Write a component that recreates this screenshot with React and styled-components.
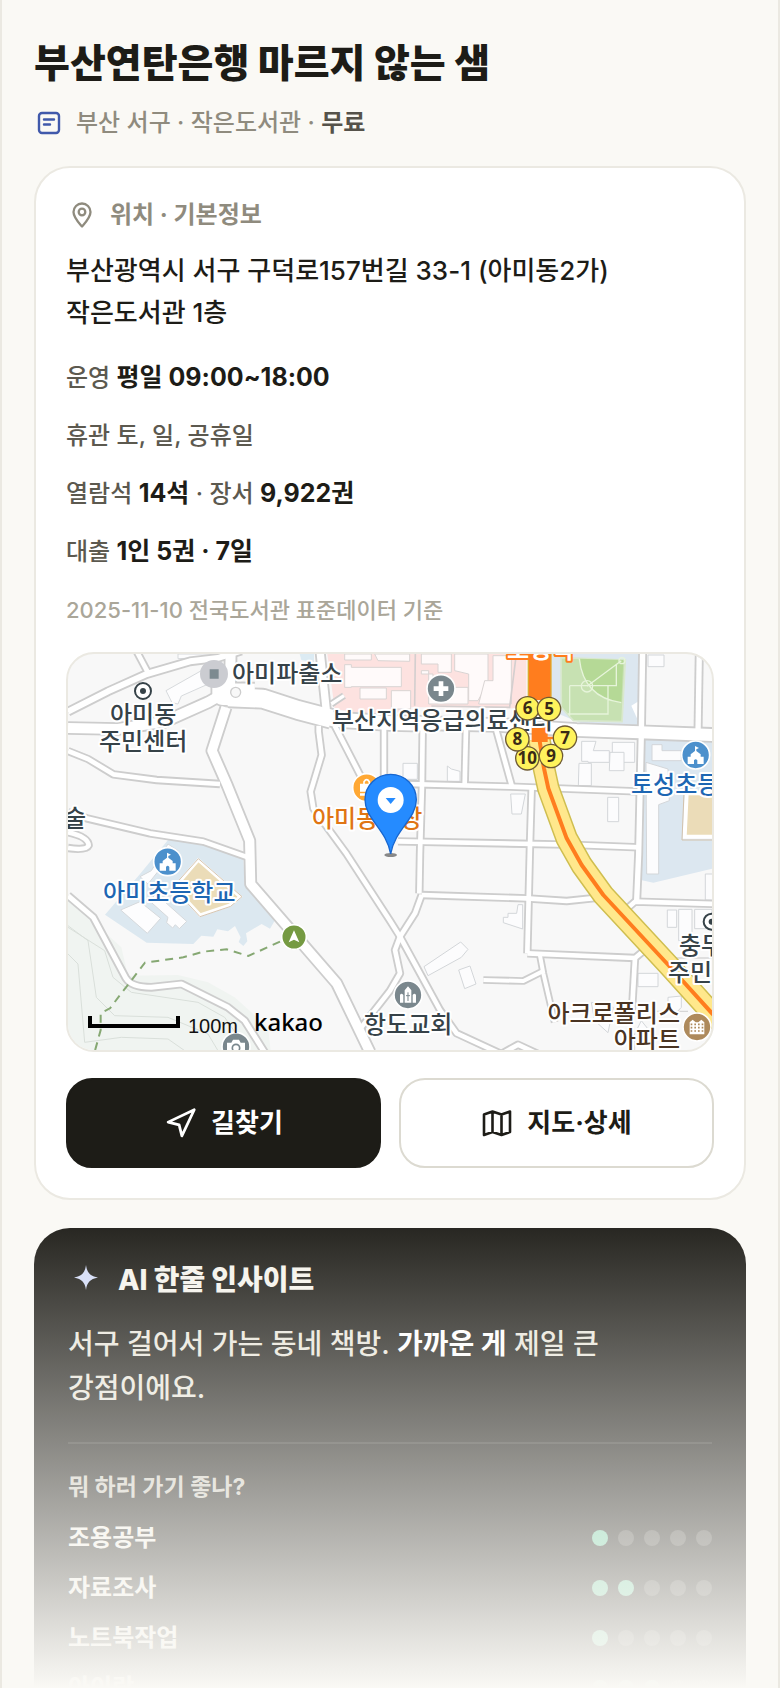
import React from 'react';
import styled, { createGlobalStyle } from 'styled-components';
import { Navigation } from 'lucide-react';

const ink = '#1d1c17';
const paper = '#faf9f5';
const line = '#ebe9e2';
const muted = '#8f8b7e';
const sans = `Inter, 'Noto Sans CJK KR', sans-serif`;
const korean = `'Noto Sans CJK KR', sans-serif`;

const GlobalStyle = createGlobalStyle`
  * {
    box-sizing: border-box;
  }

  body {
    margin: 0;
    background: ${paper};
    color: ${ink};
    font-family: ${sans};
  }
`;

const Screen = styled.main`
  position: relative;
  height: 100vh;
  overflow: hidden;
  padding: 40px 32px 0;
  border-left: 2px solid ${line};
  border-right: 2px solid ${line};
`;

const Title = styled.h1`
  margin: 0 0 18px;
  font-size: 39px;
  line-height: 46px;
  font-weight: 800;
`;

const Meta = styled.div`
  display: flex;
  align-items: center;
  gap: 12px;
  margin-bottom: 24px;
  font-size: 24px;
  line-height: 38px;
  font-weight: 500;
  color: ${muted};

  strong {
    font-weight: 700;
    color: #55524a;
  }
`;

const Card = styled.section`
  padding: 30px;
  background: #fff;
  border: 2px solid ${line};
  border-radius: 36px;
`;

const CardHeading = styled.h2`
  display: flex;
  align-items: center;
  gap: 12px;
  margin: 0 0 18px;
  font-size: 24px;
  line-height: 34px;
  font-weight: 700;
  color: ${muted};
`;

const Address = styled.p`
  margin: 0 0 24px;
  font-size: 26px;
  line-height: 42px;
  font-weight: 500;
`;

const Facts = styled.div`
  display: flex;
  flex-direction: column;
  gap: 18px;
  margin-bottom: 22px;
`;

const Fact = styled.p`
  margin: 0;
  font-size: ${props => (props.$note ? '22px' : '24px')};
  line-height: 40px;
  font-weight: 500;
  color: ${props => (props.$note ? '#aaa699' : '#5c594f')};

  strong {
    font-size: 25px;
    line-height: 1;
    font-weight: 700;
    color: ${ink};
  }
`;

const MapFrame = styled.div`
  height: 400px;
  margin-bottom: 26px;
  overflow: hidden;
  border: 2px solid ${line};
  border-radius: 28px;
  background: #f8f8f8;

  svg {
    display: block;
    width: 100%;
    height: 100%;
  }
`;

const MapLabel = styled.text`
  font-family: ${korean};
  font-size: 24px;
  font-weight: 500;
  fill: ${props => props.$color || '#364248'};
  stroke: #fff;
  stroke-width: 4px;
  stroke-linejoin: round;
  paint-order: stroke;
`;

const StationLabel = styled(MapLabel)`
  fill: #fff;
  stroke: #ff7d1e;
  font-weight: 700;
`;

const ExitNumber = styled.text`
  font-family: 'Noto Sans', sans-serif;
  font-size: 17px;
  font-weight: 700;
  fill: #3a2a16;
  text-anchor: middle;
`;

const ScaleText = styled.text`
  font-family: 'Liberation Sans', sans-serif;
  font-size: 20px;
  fill: #111;
`;

const Brand = styled.text`
  font-family: 'Noto Sans', sans-serif;
  font-size: 24px;
  font-weight: 500;
  fill: #000;
`;

const Actions = styled.div`
  display: grid;
  grid-template-columns: 1fr 1fr;
  gap: 18px;
`;

const Button = styled.button`
  display: flex;
  align-items: center;
  justify-content: center;
  gap: 14px;
  height: 90px;
  border: 2px solid ${props => (props.$primary ? ink : '#dcdad1')};
  border-radius: 26px;
  background: ${props => (props.$primary ? ink : '#fff')};
  color: ${props => (props.$primary ? '#fff' : ink)};
  font-family: ${sans};
  font-size: 26px;
  line-height: 34px;
  font-weight: 700;
`;

const Insight = styled.section`
  margin-top: 28px;
  padding: 34px;
  border-radius: 36px 36px 0 0;
  background: ${ink};
  color: #f5f3ec;
`;

const InsightTitle = styled.h2`
  display: flex;
  align-items: center;
  gap: 16px;
  margin: 0 0 24px;
  font-size: 28px;
  line-height: 36px;
  font-weight: 800;
`;

const InsightText = styled.p`
  margin: 0 0 32px;
  font-size: 28px;
  line-height: 44px;
  font-weight: 500;
  color: #e9e6dc;

  strong {
    font-weight: 700;
    color: #fff;
  }
`;

const Ratings = styled.div`
  padding-top: 28px;
  border-top: 2px solid rgba(255, 255, 255, 0.1);
`;

const RatingsTitle = styled.h3`
  margin: 0 0 11px;
  font-size: 23px;
  line-height: 30px;
  font-weight: 700;
  color: #cfccc2;
`;

const RatingRow = styled.div`
  display: flex;
  align-items: center;
  justify-content: space-between;
  font-size: 24px;
  line-height: 50px;
  font-weight: 600;
`;

const Dots = styled.div`
  display: flex;
  gap: 10px;
`;

const Dot = styled.span`
  width: 16px;
  height: 16px;
  border-radius: 50%;
  background: ${props => (props.$on ? '#6fcfa5' : '#4a4944')};
`;

const Fade = styled.div`
  position: absolute;
  left: 0;
  right: 0;
  bottom: 0;
  height: 484px;
  background: linear-gradient(to bottom, rgba(250, 249, 245, 0), ${paper});
  pointer-events: none;
`;

const ratings = [
  { name: '조용공부', score: 1 },
  { name: '자료조사', score: 2 },
  { name: '노트북작업', score: 1 },
  { name: '아이랑', score: 3 },
];

// roads are drawn twice: grey casing first, white surface on top
const roads = [
  { w: 18, d: 'M0 173L120 112L236 60L366 22L450 12L520 -10' },
  { w: 14, d: 'M205 -10L240 56' },
  { w: 30, d: 'M0 222L150 225L290 203L420 145L500 100' },
  { w: 30, d: 'M488 -10L486 100' },
  { w: 66, d: 'M466 80L466 120L560 122' },
  { w: 54, d: 'M480 130L584 134L690 168L790 194' },
  { w: 42, d: 'M760 186L800 197L966 207L1100 210' },
  { w: 36, d: 'M960 205L1296 213L1526 228L1716 235L1940 243' },
  { w: 28, d: 'M474 160L432 290L478 395L545 560L548 690L806 988L906 1195' },
  { w: 14, d: 'M0 291L60 315L136 361L266 378L456 390' },
  { w: 14, d: 'M0 475L56 493L246 538L406 563L540 610' },
  { w: 14, d: 'M0 535Q60 548 62 574Q55 590 0 582' },
  { w: 14, d: 'M752 215L752 233L761 303L728 413L736 463L836 600L966 800L996 848L1116 1068L1166 1138L1300 1200' },
  { w: 14, d: 'M800 215L880 370L930 440' },
  { w: 14, d: 'M948 225V440' },
  { w: 22, d: 'M756 -10L776 180' },
  { w: 10, d: 'M790 150L828 125' },
  { w: 14, d: 'M1064 225L1062 393L1056 600L1054 718' },
  { w: 14, d: 'M1194 225L1190 393' },
  { w: 14, d: 'M1284 225L1332 398' },
  { w: 14, d: 'M1020 390L1326 398L1706 412' },
  { w: 14, d: 'M1391 403L1386 573L1378 898' },
  { w: 14, d: 'M990 562L1500 572L1716 580' },
  { w: 14, d: 'M1061 723L1376 733L1496 741L1600 730' },
  { w: 14, d: 'M1061 723L1041 778L996 848L981 888L996 958L966 1010L880 1120' },
  { w: 14, d: 'M1378 898L1701 912L1740 880' },
  { w: 14, d: 'M1701 912L1692 1070' },
  { w: 12, d: 'M1416 905L1426 958L1460 1105' },
  { w: 12, d: 'M1246 978L1366 981L1422 953' },
  { w: 16, d: 'M1724 -10L1720 240L1712 600L1706 740' },
  { w: 14, d: 'M1670 770L1701 743L1940 750' },
  { w: 16, d: 'M1894 -10L1890 240' },
  { w: 14, d: 'M1300 1200L1350 1172L1410 1200' },
  { w: 15, d: 'M0 725L76 790L174 973Q190 1000 250 1000L340 990L480 1060L530 1100L590 1195' },
];

const mainRoad = 'M1414 255L1428 343L1441 403L1496 553L1541 633L1606 723L1801 933L1932 1078L2010 1160';

const exits = [
  { n: '10', x: 1378, y: 313 },
  { n: '9', x: 1449, y: 306 },
  { n: '8', x: 1348, y: 256 },
  { n: '7', x: 1491, y: 251 },
  { n: '6', x: 1379, y: 163 },
  { n: '5', x: 1443, y: 165 },
];

const Poi = ({ x, y, color, r = 42, children }) => (
  <g transform={`translate(${x} ${y})`}>
    <circle r={r} fill={color} stroke="#fff" strokeWidth="5" />
    {children}
  </g>
);

const SchoolMark = () => (
  <path
    fill="#fff"
    d="M-2 -27V-12L-15 -2V5H-24V27H-5V16Q0 9 5 16V27H24V5H15V-2L2 -12V-17L10 -21Z"
  />
);

const OfficeMark = ({ x, y }) => (
  <g transform={`translate(${x} ${y})`}>
    <circle r="24" fill="#fff" stroke="#364248" strokeWidth="6" />
    <circle r="9" fill="#364248" />
  </g>
);

const StreetMap = () => (
  <svg viewBox="0 0 644 396" preserveAspectRatio="xMidYMid slice">
    <g transform="scale(0.33333)">
      {/* ground */}
      <path fill="#f0f4f1" d="M0 738L76 803L160 880L180 965L330 963L420 985L500 1030L600 1120L608 1190H0Z" />
      <g fill="none" stroke="#d9dfda" strokeWidth="3">
        <path d="M0 815L60 860L85 1030L140 1085L300 1090L420 1140L450 1190" />
        <path d="M0 900L30 930L50 1165L160 1150L300 1155L350 1190" />
        <path d="M0 820L110 890L135 970L190 1015L390 1045L470 1090L540 1190" />
      </g>
      <path
        fill="#dce8f0"
        d="M300 558L400 565L526 610L530 690L620 800L606 824L581 810L534 838L538 862L526 876L512 864L518 850L501 816L480 832L448 826L436 848L400 845L376 870L236 866L111 782L216 660Z"
      />
      <path fill="#ebdcb8" stroke="#fff" strokeWidth="10" d="M391 618L516 728L486 753L396 783L320 700Z" />
      <path fill="none" stroke="#d8c5b0" strokeWidth="3" d="M391 614L522 728L488 757L396 788L314 700Z" />
      <g fill="#fdfdfe" stroke="#d6d9dc" strokeWidth="3">
        <path d="M216 743L278 793L238 838L158 768Z" />
        <path d="M264 720L356 802L334 824L322 812L314 822L296 806L300 790L244 740Z" />
        <path d="M216 668L240 690L280 640L330 590L300 570L250 650Z" />
        <path d="M294 110L400 50L430 86L340 126L330 150L312 146Z" />
        <path d="M330 0H430V10L330 14Z" />
      </g>
      <path fill="#dcebf3" d="M695 0H738V25L700 18Z" />
      <path fill="#fde2e0" d="M778 0H1375V165L1260 160H1020L960 190L800 165Z" />
      <g fill="#fffafa" stroke="#d9d4d3" strokeWidth="3">
        <path d="M830 0H910V18H830Z" />
        <path d="M920 0H1025V22L930 20Z" />
        <path d="M830 32H850V40H1000V98H850V100H830Z" />
        <path d="M876 102H955V135H876Z" />
        <path d="M970 110H1028V165H970Z" />
        <path d="M1060 0H1150V55H1110V30H1060Z" />
        <path d="M1060 50H1082V150H1200V100H1150V135H1095V60H1060Z" />
        <path d="M1160 0H1260V85L1230 140H1202V60L1160 50Z" />
        <path d="M1275 5H1330V150H1232L1250 80H1275Z" />
      </g>
      <path fill="none" stroke="#d4cfcf" strokeWidth="5" d="M1042 0L1040 155M1345 0L1325 160L1090 156" />
      <path fill="#dce7f0" d="M1451 0H1714L1708 215L1540 208L1449 170Z" />
      <path fill="#fff" d="M1690 155L1714 140L1708 195Z" />
      <path fill="#c7e1b2" stroke="#d9e8cd" strokeWidth="5" d="M1479 11L1672 18L1662 203L1516 200L1480 160Z" />
      <path fill="#b5d996" d="M1534 14L1666 18L1660 146Q1546 130 1534 14Z" />
      <g fill="none" stroke="#e6f4da" strokeWidth="4">
        <path d="M1505 95H1645V30M1505 95V185M1534 14Q1546 130 1660 146M1620 95V180H1500M1557 97L1660 20" />
        <circle cx="1557" cy="97" r="17" />
        <circle cx="1662" cy="20" r="9" />
      </g>
      <path fill="#dce7f0" d="M1731 258H1940V642L1756 686L1718 678L1725 600Z" />
      <path fill="#ebdcb8" stroke="#fff" strokeWidth="12" d="M1856 418H1940V548H1850Z" />
      <path fill="none" stroke="#d3c2ab" strokeWidth="3" d="M1848 418L1842 558H1940" />
      <g fill="#fcfcfd" stroke="#d3d6d9" strokeWidth="3">
        <path d="M1752 272H1782V290H1840V320H1752Z" />
        <path d="M1734 325L1800 345L1804 440L1772 452V660H1736Z" />
        <path d="M1740 3H1788V38H1740Z" />
        <path d="M1541 262H1584L1576 290H1624V325H1560V322H1541Z" />
        <path d="M1633 265H1700V325H1633Z" />
        <path d="M1533 328H1570V395H1531Z" />
        <path d="M1626 295H1668V350H1624Z" />
        <path d="M1005 328H1048V376H1005Z" />
        <path d="M1138 336L1150 345L1176 352V382H1138Z" />
        <path d="M1328 420H1372L1360 480H1332Z" />
        <path d="M1619 430H1652V503H1619Z" />
        <path d="M1350 752H1364V825L1306 806V790H1320V778H1346Z" />
        <path d="M1068 938L1178 864L1200 886L1180 910L1080 965Z" />
        <path d="M1172 948L1206 936L1224 990L1190 1004Z" />
        <path d="M1710 958H1770V998H1710Z" />
        <path d="M1798 768H1826V820H1798Z" />
        <path d="M1832 766H1872V860H1832Z" />
        <path d="M1880 766H1932V824H1880Z" />
        <path d="M1912 660H1940V738H1912Z" />
        <path d="M1800 1030L1840 1026V1060L1826 1075L1800 1060Z" />
        <path d="M1570 1045L1636 1060L1620 1136L1580 1100Z" />
        <path d="M1700 1140L1720 1100L1760 1150V1190H1700Z" />
      </g>
      <path fill="none" stroke="#d6d6d6" strokeWidth="4" d="M1760 912H1940M1730 1072H1860" />

      {/* streets */}
      <g fill="none" stroke="#cdcdcd" strokeLinejoin="round">
        {roads.map(road => <path key={road.d} d={road.d} strokeWidth={road.w + 11} />)}
      </g>
      <g fill="none" stroke="#fff" strokeLinejoin="round">
        {roads.map(road => <path key={road.d} d={road.d} strokeWidth={road.w} />)}
      </g>
      <circle cx="503" cy="115" r="15" fill="#f8f8f8" stroke="#cdcdcd" strokeWidth="4" />
      <path
        fill="none"
        stroke="#86a873"
        strokeWidth="6"
        strokeDasharray="24 18"
        d="M636 863L541 906L476 886L406 893L346 910L231 926L191 978L156 1023L126 1063L98 1078V1128L81 1190"
      />

      {/* subway and the avenue over it */}
      <g fill="none" strokeLinejoin="round">
        <path d={mainRoad} stroke="#cfbe50" strokeWidth="68" />
        <path d={mainRoad} stroke="#ffe88c" strokeWidth="59" />
        <path d={mainRoad} stroke="#ff7d1e" strokeWidth="12" />
      </g>
      <path fill="#ff7d1e" d="M1380 -10H1449V138H1381Z" />
      <path stroke="#dca82c" strokeWidth="4" d="M1381 0V138M1449 0V138" />
      <path fill="#ff7d1e" d="M1391 218H1439V248H1456V256H1439V264H1391Z" />
    </g>

    <MapLabel x="164" y="28">아미파출소</MapLabel>
    <MapLabel x="42" y="69">아미동</MapLabel>
    <MapLabel x="31" y="96">주민센터</MapLabel>
    <MapLabel x="264" y="75">부산지역응급의료센터</MapLabel>
    <MapLabel x="-4" y="173">술</MapLabel>
    <MapLabel x="35" y="247" $color="#1d66b3">아미초등학교</MapLabel>
    <MapLabel x="296" y="379">항도교회</MapLabel>
    <MapLabel x="563" y="139" $color="#1d66b3">토성초등학교</MapLabel>
    <MapLabel x="611" y="300">충무동</MapLabel>
    <MapLabel x="600" y="327">주민센터</MapLabel>
    <MapLabel x="612" y="368" textAnchor="end" $color="#4a3423">아크로폴리스</MapLabel>
    <MapLabel x="612" y="394" textAnchor="end" $color="#4a3423">아파트</MapLabel>
    <StationLabel x="439" y="4">토성역</StationLabel>

    <g transform="scale(0.33333)">
      <circle cx="438" cy="60" r="42" fill="#cbccd1" />
      <path fill="#7d8a90" d="M425 46H452V74H425Z" />
      <OfficeMark x={225} y={111} />
      <OfficeMark x={1931} y={803} />
      <Poi x={1119} y={104} color="#7a878d">
        <path d="M-22 0H22M0 -22V22" stroke="#fff" strokeWidth="14" />
      </Poi>
      <Poi x={299} y={623} color="#4c90cc"><SchoolMark /></Poi>
      <Poi x={1883} y={303} color="#4c90cc"><SchoolMark /></Poi>
      <Poi x={896} y={401} color="#ffa834">
        <path fill="#fff" d="M-20 -12H20V12H-20ZM-20 17H20V24H-20Z" />
        <path fill="none" stroke="#fff" strokeWidth="5" d="M-8 -8V-18Q0 -30 8 -18V-8" />
      </Poi>
      <Poi x={678} y={849} r={37} color="#759a42">
        <path fill="#fff" d="M0 -20L16 16L0 8L-16 16Z" />
      </Poi>
      <Poi x={1020} y={1023} color="#7a878d">
        <path fill="#fff" d="M-10 23V-14L0 -26L10 -14V23ZM-24 23V0Q-20 -7 -14 0V23ZM14 23V0Q20 -7 24 0V23Z" />
        <path stroke="#7a878d" strokeWidth="3" d="M0 -8V18M-6 2H6" />
      </Poi>
      <Poi x={504} y={1178} color="#7a878d">
        <path fill="#fff" d="M-27 -12H-14L-9 -21H9L14 -12H27V22H-27Z" />
        <circle cy="4" r="11" fill="none" stroke="#7a878d" strokeWidth="5" />
      </Poi>
      <Poi x={1887} y={1119} color="#ae8a5c">
        <path fill="#fff" d="M-22 22V-14L-13 -22L-4 -14H4L13 -22L22 -14V22Z" />
        <path
          stroke="#ae8a5c"
          strokeWidth="5"
          strokeDasharray="5 6"
          d="M-19 -8H20M-19 2H20M-19 12H20"
        />
      </Poi>
      {exits.map(exit => (
        <circle key={exit.n} cx={exit.x} cy={exit.y} r="35" fill="#fff35c" stroke="#6e5a34" strokeWidth="4" />
      ))}
    </g>

    {exits.map(exit => (
      <ExitNumber key={exit.n} x={exit.x / 3} y={exit.y / 3 + 6}>{exit.n}</ExitNumber>
    ))}

    <MapLabel x="244" y="173" $color="#e07514">아미동시장</MapLabel>

    {/* place marker */}
    <g transform="scale(0.33333)">
      <ellipse cx="968" cy="603" rx="19" ry="6" fill="#000" opacity="0.45" />
      <path
        fill="#258bff"
        stroke="#1766cf"
        strokeWidth="4"
        d="M968 361C925 361 891 395 891 437C891 495 955 525 968 600C981 525 1045 495 1045 437C1045 395 1011 361 968 361Z"
      />
      <circle cx="968" cy="438" r="39" fill="#fff" />
      <path fill="#258bff" d="M953 432H983L968 450Z" />
    </g>

    <path d="M22 362V372H110V362" fill="none" stroke="#000" strokeWidth="4" />
    <ScaleText x="120" y="379">100m</ScaleText>
    <Brand x="186" y="377">kakao</Brand>
  </svg>
);

const LibraryIcon = () => (
  <svg width="30" height="30" viewBox="0 0 30 30" fill="none" stroke="#4059ab" strokeWidth="2.400" strokeLinecap="round">
    <rect x="5" y="5" width="20" height="20" rx="3" />
    <path d="M10 11.500H20M10 16.500H16" />
  </svg>
);

const PinIcon = () => (
  <svg width="32" height="32" viewBox="0 0 32 32" fill="none" stroke={muted} strokeWidth="2.300" strokeLinejoin="round">
    <path d="M16 27.500C13 24 7.500 18.500 7.500 13A8.500 8.500 0 0 1 24.500 13C24.500 18.500 19 24 16 27.500Z" />
    <circle cx="16" cy="13" r="3.300" />
  </svg>
);

const MapIcon = () => (
  <svg width="32" height="32" viewBox="0 0 32 32" fill="none" stroke="currentColor" strokeWidth="2.600" strokeLinejoin="round">
    <path d="M3 7.500L11.500 4.500L20.500 7.500L29 4.500V25L20.500 28L11.500 25L3 28ZM11.500 4.500V25M20.500 7.500V28" />
  </svg>
);

const SparkIcon = () => (
  <svg width="34" height="34" viewBox="0 0 34 34">
    <path
      fill="#d3dcf8"
      d="M18 2C19 9.500 22 13 30 14.500C22 16 19 19.500 18 27C17 19.500 14 16 6 14.500C14 13 17 9.500 18 2Z"
    />
  </svg>
);

const App = () => (
  <>
    <GlobalStyle />
    <Screen>
      <Title>부산연탄은행 마르지 않는 샘</Title>
      <Meta>
        <LibraryIcon />
        <span>부산 서구 · 작은도서관 · <strong>무료</strong></span>
      </Meta>

      <Card>
        <CardHeading>
          <PinIcon />
          위치 · 기본정보
        </CardHeading>
        <Address>
          부산광역시 서구 구덕로157번길 33-1 (아미동2가)
          <br />
          작은도서관 1층
        </Address>
        <Facts>
          <Fact>운영 <strong>평일 09:00~18:00</strong></Fact>
          <Fact>휴관 토, 일, 공휴일</Fact>
          <Fact>열람석 <strong>14석</strong> · 장서 <strong>9,922권</strong></Fact>
          <Fact>대출 <strong>1인 5권 · 7일</strong></Fact>
          <Fact $note>2025-11-10 전국도서관 표준데이터 기준</Fact>
        </Facts>
        <MapFrame>
          <StreetMap />
        </MapFrame>
        <Actions>
          <Button type="button" $primary>
            <Navigation size={33} strokeWidth={2} />
            길찾기
          </Button>
          <Button type="button">
            <MapIcon />
            지도·상세
          </Button>
        </Actions>
      </Card>

      <Insight>
        <InsightTitle>
          <SparkIcon />
          AI 한줄 인사이트
        </InsightTitle>
        <InsightText>
          서구 걸어서 가는 동네 책방. <strong>가까운 게</strong> 제일 큰
          <br />
          강점이에요.
        </InsightText>
        <Ratings>
          <RatingsTitle>뭐 하러 가기 좋나?</RatingsTitle>
          {ratings.map(rating => (
            <RatingRow key={rating.name}>
              {rating.name}
              <Dots>
                {[1, 2, 3, 4, 5].map(step => <Dot key={step} $on={step <= rating.score} />)}
              </Dots>
            </RatingRow>
          ))}
        </Ratings>
      </Insight>
      <Fade />
    </Screen>
  </>
);

export default App;
